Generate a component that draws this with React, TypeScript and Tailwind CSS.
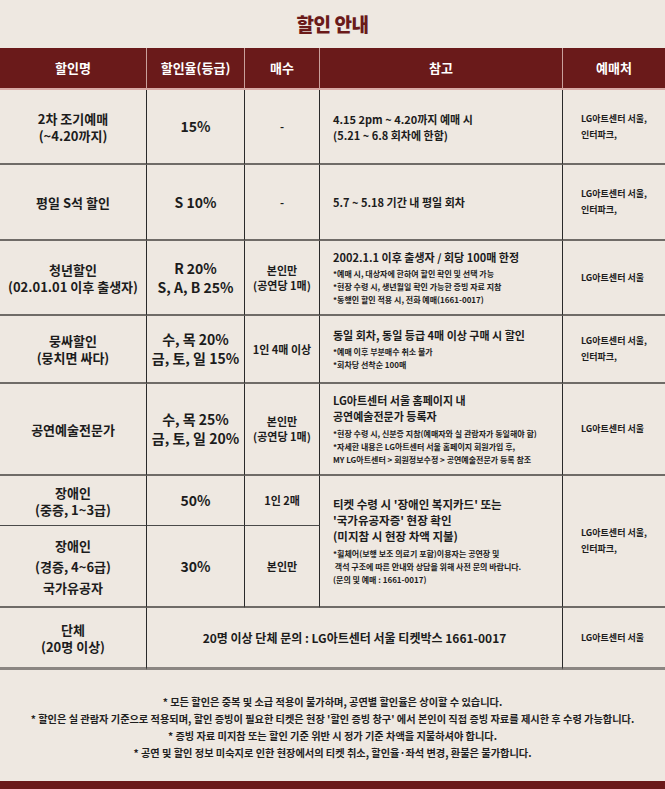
const FONT = { fontFamily: '"Noto Sans CJK KR", "Noto Sans", sans-serif' }

const H = 'border-r border-b-2 border-r-[#c9a09c] border-b-[#d8aaa6] bg-[#6a1a1a] text-white text-[13px] font-bold text-center'
const C1 = 'border-r border-b-2 border-r-[#2a2a2a] border-b-[#6f6b67] text-center text-[13px] font-bold leading-[17px] text-[#1c1c1c]'
const C2 = 'border-r border-b-2 border-r-[#2a2a2a] border-b-[#6f6b67] text-center text-[14px] font-bold leading-[19px] text-[#1c1c1c]'
const C3 = 'border-r border-b-2 border-r-[#2a2a2a] border-b-[#6f6b67] text-center text-[11px] font-semibold leading-[15px] text-[#1c1c1c] whitespace-nowrap'
const C4 = 'border-r border-b-2 border-r-[#2a2a2a] border-b-[#6f6b67] pl-[13px] text-left text-[11px] font-bold leading-[16px] text-[#1c1c1c]'
const C5 = 'border-b-2 border-b-[#6f6b67] pl-[18px] text-left text-[9px] font-semibold leading-[16px] text-[#1c1c1c]'

function Note({ children }: { children: React.ReactNode }) {
  return <div className="text-[8px] leading-[13px] font-semibold">{children}</div>
}

function Vendor({ both }: { both?: boolean }) {
  return (
    <td className={C5}>
      {both ? (
        <>
          LG아트센터 서울,
          <br />
          인터파크,
        </>
      ) : (
        'LG아트센터 서울'
      )}
    </td>
  )
}

export default function App() {
  return (
    <div className="w-[665px] h-[789px] bg-[#eee8e1] flex flex-col" style={FONT}>
      <div className="h-[48px] flex items-center justify-center">
        <h1 className="text-[19px] font-black text-[#6a1a1a] tracking-tight">할인 안내</h1>
      </div>

      <table className="w-[665px] table-fixed border-separate border-spacing-0">
        <colgroup>
          <col className="w-[147px]" />
          <col className="w-[98px]" />
          <col className="w-[75px]" />
          <col className="w-[243px]" />
          <col className="w-[102px]" />
        </colgroup>
        <thead>
          <tr className="h-[42px]">
            <th className={H}>할인명</th>
            <th className={H}>할인율(등급)</th>
            <th className={H}>매수</th>
            <th className={H}>참고</th>
            <th className="border-b-2 border-b-[#d8aaa6] bg-[#6a1a1a] text-white text-[13px] font-bold text-center">예매처</th>
          </tr>
        </thead>
        <tbody>
          <tr className="h-[75px]">
            <td className={C1}>
              2차 조기예매
              <br />
              (~4.20까지)
            </td>
            <td className={C2}>15%</td>
            <td className={C3}>-</td>
            <td className={C4}>
              4.15 2pm ~ 4.20까지 예매 시
              <br />
              (5.21 ~ 6.8 회차에 한함)
            </td>
            <Vendor both />
          </tr>

          <tr className="h-[76px]">
            <td className={C1}>평일 S석 할인</td>
            <td className={C2}>S 10%</td>
            <td className={C3}>-</td>
            <td className={C4}>5.7 ~ 5.18 기간 내 평일 회차</td>
            <Vendor both />
          </tr>

          <tr className="h-[75px]">
            <td className={C1}>
              청년할인
              <br />
              (02.01.01 이후 출생자)
            </td>
            <td className={C2}>
              R 20%
              <br />
              S, A, B 25%
            </td>
            <td className={C3}>
              본인만
              <br />
              (공연당 1매)
            </td>
            <td className={C4}>
              <div className="mb-[2px]">2002.1.1 이후 출생자 / 회당 100매 한정</div>
              <Note>*예매 시, 대상자에 한하여 할인 확인 및 선택 가능</Note>
              <Note>*현장 수령 시, 생년월일 확인 가능한 증빙 자료 지참</Note>
              <Note>*동행인 할인 적용 시, 전화 예매(1661-0017)</Note>
            </td>
            <Vendor />
          </tr>

          <tr className="h-[68px]">
            <td className={C1}>
              뭉싸할인
              <br />
              (뭉치면 싸다)
            </td>
            <td className={C2}>
              수, 목 20%
              <br />
              금, 토, 일 15%
            </td>
            <td className={C3}>1인 4매 이상</td>
            <td className={C4}>
              <div className="mb-[2px]">동일 회차, 동일 등급 4매 이상 구매 시 할인</div>
              <Note>*예매 이후 부분매수 취소 불가</Note>
              <Note>*회차당 선착순 100매</Note>
            </td>
            <Vendor both />
          </tr>

          <tr className="h-[92px]">
            <td className={C1}>공연예술전문가</td>
            <td className={C2}>
              수, 목 25%
              <br />
              금, 토, 일 20%
            </td>
            <td className={C3}>
              본인만
              <br />
              (공연당 1매)
            </td>
            <td className={C4}>
              <div className="mb-[3px]">
                LG아트센터 서울 홈페이지 내
                <br />
                공연예술전문가 등록자
              </div>
              <Note>*현장 수령 시, 신분증 지참(예매자와 실 관람자가 동일해야 함)</Note>
              <Note>*자세한 내용은 LG아트센터 서울 홈페이지 회원가입 후,</Note>
              <Note>MY LG아트센터 &gt; 회원정보수정 &gt; 공연예술전문가 등록 참조</Note>
            </td>
            <Vendor />
          </tr>

          <tr className="h-[50px]">
            <td className={C1 + ' !border-b !border-b-[#4a4a4a]'}>
              장애인
              <br />
              (중증, 1~3급)
            </td>
            <td className={C2 + ' !border-b !border-b-[#4a4a4a]'}>50%</td>
            <td className={C3 + ' !border-b !border-b-[#4a4a4a]'}>1인 2매</td>
            <td className={C4} rowSpan={2}>
              <div className="mb-[3px] text-[11.5px] leading-[16px]">
                티켓 수령 시 '장애인 복지카드' 또는
                <br />
                '국가유공자증' 현장 확인
                <br />
                (미지참 시 현장 차액 지불)
              </div>
              <Note>*휠체어(보행 보조 의료기 포함)이용자는 공연장 및</Note>
              <Note>&nbsp;객석 구조에 따른 안내와 상담을 위해 사전 문의 바랍니다.</Note>
              <Note>(문의 및 예매 : 1661-0017)</Note>
            </td>
            <td className={C5} rowSpan={2}>
              LG아트센터 서울,
              <br />
              인터파크,
            </td>
          </tr>
          <tr className="h-[82px]">
            <td className={C1 + ' leading-[21px]'}>
              장애인
              <br />
              (경증, 4~6급)
              <br />
              국가유공자
            </td>
            <td className={C2}>30%</td>
            <td className={C3}>본인만</td>
          </tr>

          <tr className="h-[62px]">
            <td className={C1 + ' !border-b-[3px] !border-b-[#8b8682]'}>
              단체
              <br />
              (20명 이상)
            </td>
            <td
              colSpan={3}
              className="border-r border-b-[3px] border-r-[#2a2a2a] border-b-[#8b8682] text-center text-[12px] font-semibold text-[#1c1c1c]"
            >
              20명 이상 단체 문의 : LG아트센터 서울 티켓박스 1661-0017
            </td>
            <td className={C5 + ' !border-b-[3px] !border-b-[#8b8682]'}>LG아트센터 서울</td>
          </tr>
        </tbody>
      </table>

      <div className="h-[111px] pt-[23px] text-center text-[10.2px] leading-[17px] font-bold text-[#1f1f1f]">
        <p>* 모든 할인은 중복 및 소급 적용이 불가하며, 공연별 할인율은 상이할 수 있습니다.</p>
        <p>
          * 할인은 실 관람자 기준으로 적용되며, 할인 증빙이 필요한 티켓은 현장 '할인 증빙 창구' 에서 본인이 직접 증빙 자료를 제시한 후 수령 가능합니다.
        </p>
        <p>* 증빙 자료 미지참 또는 할인 기준 위반 시 정가 기준 차액을 지불하셔야 합니다.</p>
        <p>* 공연 및 할인 정보 미숙지로 인한 현장에서의 티켓 취소, 할인율·좌석 변경, 환불은 불가합니다.</p>
      </div>
      <div className="h-[8px] bg-[#6a1a1a]" />
    </div>
  )
}
